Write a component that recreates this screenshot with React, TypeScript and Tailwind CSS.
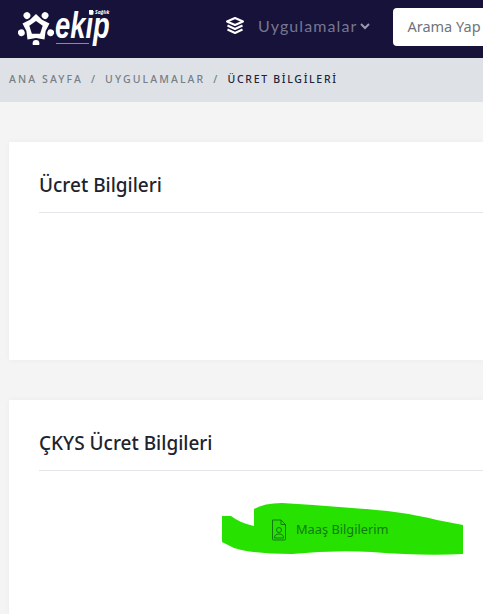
import React from "react";

const sans = { fontFamily: '"Noto Sans", "Open Sans", sans-serif' };

function LogoMark() {
  const dots = [36, 108, 180, 252, 324];
  return (
    <svg width="36" height="36" viewBox="0 0 36 36" className="mb-[5px] shrink-0">
      {dots.map((a) => (
        <circle key={a} cx="18" cy="3.6" r="3.4" fill="#fff" transform={`rotate(${a} 18 19)`} />
      ))}
      <path
        fill="#fff"
        fillRule="evenodd"
        d="M18 5 L24 10.8 L31.5 14.5 L27.6 22.1 L26.5 30.5 L18 29 L9.5 30.5 L8.4 22.1 L4.5 14.5 L12 10.8 Z M18 12 L24.7 16.8 L22.1 24.7 L13.9 24.7 L11.3 16.8 Z"
      />
    </svg>
  );
}

function LayersIcon() {
  return (
    <svg width="20" height="20" viewBox="0 0 20 20" fill="none" stroke="#fff" strokeWidth="2" strokeLinejoin="round" className="mb-[7px] shrink-0">
      <path d="M10 2 L18 5.5 L10 9 L2 5.5 Z" />
      <path d="M2.5 9.5 L10 13 L17.5 9.5" />
      <path d="M2.5 13.5 L10 17 L17.5 13.5" />
    </svg>
  );
}

function Card({ title, className, children }: { title: string; className: string; children?: React.ReactNode }) {
  return (
    <section className={`ml-[9px] bg-white pl-[30px] shadow-[0_0_6px_rgba(0,0,0,0.04)] ${className}`}>
      <h2 className="h-[71px] border-b border-[#e3e5e8] pt-[29px] text-[19px] leading-[29px] font-medium text-[#20232e]" style={sans}>
        {title}
      </h2>
      {children}
    </section>
  );
}

export default function App() {
  return (
    <div className="relative h-[614px] w-[483px] overflow-hidden bg-[#f4f4f4]" style={sans}>
      <header className="flex h-[58px] items-center overflow-hidden bg-[#16123a]">
        <div className="ml-[18px] flex w-[207px] shrink-0 items-center">
          <LogoMark />
          <div className="relative ml-[1px] h-[46px] w-[55px]">
            <span
              className="absolute top-[0px] left-[0px] origin-left scale-x-[0.76] text-[36px] leading-[40px] font-bold text-white italic"
              style={{ fontFamily: '"Liberation Sans", sans-serif' }}
            >
              ekip
            </span>
            <span className="absolute top-[4px] left-[34px] h-[4px] w-[4px] bg-white" />
            <span className="absolute top-[3px] left-[40px] text-[5px] leading-[6px] font-bold text-white italic">Sağlık</span>
            <span className="absolute top-[37px] left-[1px] h-[1px] w-[33px] bg-white/50" />
          </div>
        </div>
        <LayersIcon />
        <span className="mb-[7px] ml-[13px] shrink-0 text-[16px] tracking-[1.1px] text-[#77778f]" style={{ fontFamily: "Lato, sans-serif" }}>
          Uygulamalar
        </span>
        <svg width="10" height="8" viewBox="0 0 10 8" fill="none" stroke="#9a9ab0" strokeWidth="2" className="mb-[7px] ml-[3px] shrink-0">
          <path d="M1 2 L5 6 L9 2" />
        </svg>
        <div className="mb-[4px] ml-[23px] flex h-[38px] w-[120px] shrink-0 items-center rounded-l-[4px] bg-white pl-[14px] text-[14.5px] text-[#6c757d]">
          Arama Yap
        </div>
      </header>
      <nav className="flex h-[44px] items-center gap-[8px] bg-[#dee2e6] pl-[9px] text-[10.5px] font-medium tracking-[2.1px] text-[#777f87]">
        <span>ANA SAYFA</span>
        <span>/</span>
        <span>UYGULAMALAR</span>
        <span>/</span>
        <span className="tracking-[1.7px] text-[#20233a]">ÜCRET BİLGİLERİ</span>
      </nav>
      <main className="pt-[40px]">
        <Card title="Ücret Bilgileri" className="h-[218px]" />
        <Card title="ÇKYS Ücret Bilgileri" className="mt-[40px] h-[214px]" />
      </main>
      <div className="absolute top-[502px] left-[222px] h-[54px] w-[242px]">
        <svg width="242" height="54" viewBox="0 0 242 54" className="absolute inset-0">
          <path
            fill="#27e200"
            d="M0 14 L9 14 Q18 21 32 24 L32 7 Q42 1 60 1 Q95 3 130 6 Q180 9 215 18 L241 23 L241 52 Q200 54 150 50 Q110 48 70 52 Q30 52 12 46 L0 40 Z"
          />
        </svg>
        <div className="absolute top-[17px] left-[49px] flex items-center gap-[9px] text-[12.8px] text-[#127a12]">
          <svg width="16" height="22" viewBox="0 0 16 22" fill="none" stroke="#127a12" strokeWidth="1">
            <path d="M1.5 1 H10 L14.5 5.5 V20 Q14.5 21 13.5 21 H2.5 Q1.5 21 1.5 20 Z" />
            <path d="M10 1 V5.5 H14.5" />
            <circle cx="8" cy="11" r="2.5" />
            <path d="M3.5 19 Q3.5 15 8 15 Q12.5 15 12.5 19 Z" />
          </svg>
          <span>Maaş Bilgilerim</span>
        </div>
      </div>
    </div>
  );
}
